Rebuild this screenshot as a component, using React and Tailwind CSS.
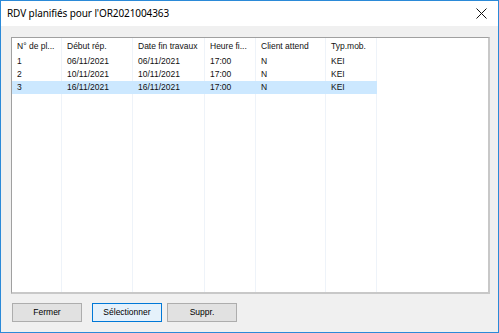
const columns = [
  { label: "N° de pl...", width: 50 },
  { label: "Début rép.", width: 71 },
  { label: "Date fin travaux", width: 72 },
  { label: "Heure fi...", width: 51 },
  { label: "Client attend", width: 70 },
  { label: "Typ.mob.", width: 51 },
];

const rows = [
  ["1", "06/11/2021", "06/11/2021", "17:00", "N", "KEI"],
  ["2", "10/11/2021", "10/11/2021", "17:00", "N", "KEI"],
  ["3", "16/11/2021", "16/11/2021", "17:00", "N", "KEI"],
];

function Cell({ width, children }) {
  return (
    <div
      style={{ width }}
      className="shrink-0 h-full flex items-center pl-[5px] overflow-hidden whitespace-nowrap"
    >
      {children}
    </div>
  );
}

export default function App() {
  return (
    <div className="w-[499px] h-[333px] border border-[#2b8ad8] flex flex-col bg-white font-['Liberation_Sans',Arial,sans-serif] text-black">
      {/* title bar */}
      <div className="h-[25px] shrink-0 flex items-center justify-between bg-white pl-[6px] pr-[8px]">
        <span className="text-[10px] font-['Noto_Sans',sans-serif] tracking-[-0.1px]">
          RDV planifiés pour l'OR2021004363
        </span>
        <svg width="11" height="11" viewBox="0 0 11 11" className="mr-[3px]">
          <path d="M0.5 0.5 L10.5 10.5 M10.5 0.5 L0.5 10.5" stroke="#111" strokeWidth="1" />
        </svg>
      </div>

      {/* body */}
      <div className="flex-1 bg-[#f0f0f0] pl-[10px] pt-[11px] flex flex-col">
        <div className="w-[479px] h-[257px] bg-white border border-[#a0a0a0] border-r-2 border-b-2 border-r-[#c8c8c8] border-b-[#c8c8c8] relative text-[8.5px] text-[#111]">
          {/* column separators */}
          <div className="absolute inset-0 flex pointer-events-none">
            {columns.map((c, i) => (
              <div key={i} style={{ width: c.width }} className="shrink-0 h-full border-r border-[#eef3f9]" />
            ))}
          </div>
          <div className="relative">
            <div className="h-[17px] flex">
              {columns.map((c, i) => (
                <Cell key={i} width={c.width}>{c.label}</Cell>
              ))}
            </div>
            {rows.map((r, ri) => (
              <div
                key={ri}
                className={`h-[13px] flex w-[365px] ${ri === 2 ? "bg-[#cce8ff]" : ""}`}
              >
                {r.map((v, i) => (
                  <Cell key={i} width={columns[i].width}>{v}</Cell>
                ))}
              </div>
            ))}
          </div>
        </div>

        {/* buttons */}
        <div className="flex items-center mt-[9px] pl-[1px] text-[8.5px]">
          <button className="w-[70px] h-[19px] bg-[#e1e1e1] border border-[#adadad] flex items-center justify-center">
            Fermer
          </button>
          <button className="w-[70px] h-[19px] ml-[10px] bg-[#e5f1fb] border border-[#0078d7] flex items-center justify-center">
            Sélectionner
          </button>
          <button className="w-[70px] h-[19px] ml-[5px] bg-[#e1e1e1] border border-[#adadad] flex items-center justify-center">
            Suppr.
          </button>
        </div>
      </div>
    </div>
  );
}
